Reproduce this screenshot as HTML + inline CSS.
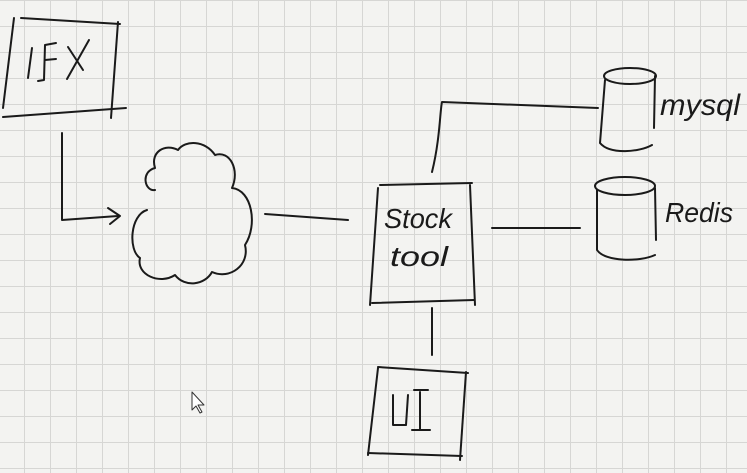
<!DOCTYPE html>
<html><head><style>
html,body{margin:0;padding:0;}
body{width:747px;height:473px;overflow:hidden;background:#f3f3f1;
background-image:linear-gradient(to right,#d6d6d4 1px,transparent 1px),linear-gradient(to bottom,#d6d6d4 1px,transparent 1px);
background-size:26px 26px;background-position:24px 0px;}
svg{position:absolute;left:0;top:0;}
</style></head><body>
<svg width="747" height="473" viewBox="0 0 747 473" fill="none" stroke="#1a1a1a" stroke-width="2" stroke-linecap="round" stroke-linejoin="round">
<path d="M21 18 L120 24"/><path d="M14 18 L3 108"/><path d="M118 22 L111 118"/><path d="M3 117 L126 108"/>
<path d="M32 48 L28 78"/><path d="M56 43 L45 45 L44 80 L38 81"/><path d="M45 60 L56 59"/><path d="M68 47 L83 70"/><path d="M89 40 L67 79"/>
<path d="M62 133 L62 220 L118 216"/><path d="M108 208 L120 216 L110 224"/>
<path d="M147 210 C130 215 128 250 140 258 C136 275 160 285 175 275 C185 288 205 285 212 272 C230 280 250 265 245 245 C258 225 252 190 232 188 C240 170 230 150 215 155 C205 140 185 140 178 150 C165 143 150 152 155 168 C140 172 145 192 155 190"/>
<path d="M265 214 L348 220"/>
<path d="M380 185 L472 183"/><path d="M378 188 L370 305"/><path d="M470 185 L475 305"/><path d="M372 303 L474 300"/>
<g font-family="Liberation Sans Narrow,Liberation Sans,sans-serif" fill="#1a1a1a" stroke="none" font-style="italic">
<text x="384" y="228" font-size="28" textLength="68" lengthAdjust="spacingAndGlyphs">Stock</text>
<text x="390" y="266" font-size="28" textLength="58" lengthAdjust="spacingAndGlyphs">tool</text>
<text x="660" y="115" font-size="30" textLength="80" lengthAdjust="spacingAndGlyphs">mysql</text>
<text x="665" y="222" font-size="28" textLength="68" lengthAdjust="spacingAndGlyphs">Redis</text>
</g>
<path d="M432 172 C440 140 440 110 442 102 L598 108"/>
<path d="M492 228 L580 228"/>
<path d="M432 308 L432 355"/>
<path d="M378 367 L468 373"/><path d="M378 368 L368 455"/><path d="M466 372 L460 460"/><path d="M368 453 L462 456"/>
<path d="M393 395 L393 425 L406 425 L408 395"/><path d="M420 392 L420 430"/><path d="M414 390 L428 390"/><path d="M412 430 L430 430"/>
<ellipse cx="630" cy="76" rx="26" ry="8"/><path d="M605 80 L600 143 C610 155 640 152 652 145"/><path d="M655 76 L654 128"/>
<ellipse cx="625" cy="186" rx="30" ry="9"/><path d="M597 190 L597 250 C605 262 640 262 655 255"/><path d="M655 188 L656 240"/>
<path d="M192 392 L192 410 L196 406 L200 413 L202 412 L198 405 L204 405 Z" fill="#fff" stroke="#333" stroke-width="1"/>
</svg>
</body></html>
